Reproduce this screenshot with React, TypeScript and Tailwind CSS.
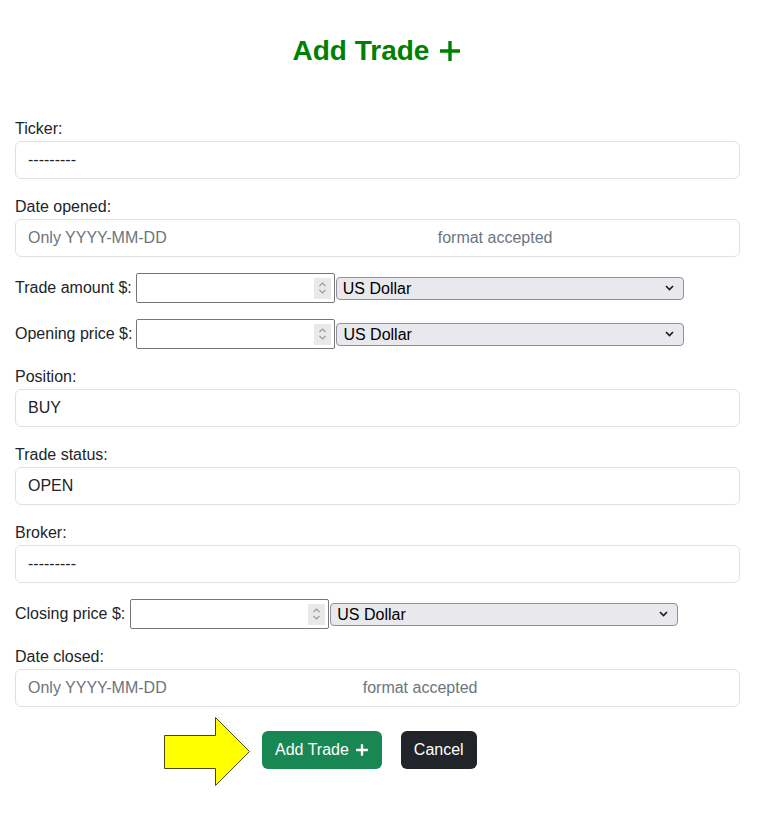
import { useState } from "react";

const PlusIcon = ({ size, stroke }: { size: number; stroke: number }) => (
  <svg width={size} height={size} viewBox="0 0 24 24" fill="none">
    <path d="M12 2v20M2 12h20" stroke="currentColor" strokeWidth={stroke} />
  </svg>
);

const Spinner = () => (
  <span className="flex h-[21px] w-[17px] flex-col items-center justify-center bg-[#e9e9ea]">
    <svg width="9" height="14" viewBox="0 0 9 14" fill="none">
      <path d="M1.5 5l3-3 3 3M1.5 9l3 3 3-3" stroke="#999999" strokeWidth="1.1" />
    </svg>
  </span>
);

function MoneyRow({
  label,
  inputGap,
}: {
  label: string;
  inputGap: string;
}) {
  const [val, setVal] = useState("");
  const [cur, setCur] = useState("USD");
  return (
    <div className="mb-4 flex h-[30px] items-center">
      <label className={inputGap}>{label}</label>
      <div className="flex h-[30px] w-[199px] items-center rounded-[2px] border border-[#767676] pr-[3px]">
        <input
          value={val}
          onChange={(e) => setVal(e.target.value)}
          inputMode="decimal"
          className="h-full min-w-0 flex-1 px-[2px] outline-none"
        />
        <Spinner />
      </div>
      <div className="ml-[1px] flex h-[23px] w-[348px] items-center rounded-[4px] border border-[#8f8f9d] bg-[#e9e9ed] pr-[9px]">
        <select
          value={cur}
          onChange={(e) => setCur(e.target.value)}
          className="h-full min-w-0 flex-1 appearance-none pl-[6px] leading-[19px] text-black outline-none"
        >
          <option value="USD">US Dollar</option>
          <option value="EUR">Euro</option>
          <option value="GBP">British Pound</option>
        </select>
        <svg width="9" height="6" viewBox="0 0 9 6" fill="none">
          <path d="M1 1l3.5 3.5L8 1" stroke="#1a1a1a" strokeWidth="1.6" />
        </svg>
      </div>
    </div>
  );
}

function Field({ label, value }: { label: string; value: string }) {
  return (
    <div className="mb-4">
      <label className="block leading-6">{label}</label>
      <input
        defaultValue={value}
        className="h-[38px] w-full rounded-[6px] border border-[#dee2e6] px-3 text-[#212529] outline-none"
      />
    </div>
  );
}

function DateField({
  label,
  gap,
  className = "mb-4",
}: {
  label: string;
  gap: string;
  className?: string;
}) {
  return (
    <div className={className}>
      <label className="block leading-6">{label}</label>
      <div className="flex h-[38px] w-full items-center rounded-[6px] border border-[#dee2e6] px-3 text-[#6c757d]">
        <span>Only YYYY-MM-DD</span>
        <span className={gap}>format accepted</span>
      </div>
    </div>
  );
}

export default function App() {
  return (
    <div className="min-h-screen bg-white font-['Liberation_Sans',Arial,sans-serif] text-[16px] text-[#212529]">
      <div className="ml-[15px] w-[725px] pt-[34px]">
        <h3 className="mb-[49px] flex h-[34px] items-center justify-center gap-[9px] text-[28px] font-bold leading-[34px] text-[#008000]">
          Add Trade
          <PlusIcon size={24} stroke={3.4} />
        </h3>

        <Field label="Ticker:" value="---------" />
        <DateField label="Date opened:" gap="ml-[271px]" />
        <MoneyRow label="Trade amount $:" inputGap="mr-[4px]" />
        <MoneyRow label="Opening price $:" inputGap="mr-[4px]" />
        <Field label="Position:" value="BUY" />
        <Field label="Trade status:" value="OPEN" />
        <Field label="Broker:" value="---------" />
        <MoneyRow label="Closing price $:" inputGap="mr-[5px]" />
        <DateField label="Date closed:" gap="ml-[196px]" className="mb-0" />

        <div className="ml-[148px] mt-[9px] flex items-center">
          <svg width="88" height="71" viewBox="0 0 88 71" fill="none">
            <polygon
              points="1.5,19.5 52.5,19.5 52.5,1.5 86.5,35.5 52.5,69.5 52.5,52.5 1.5,52.5"
              fill="#ffff00"
              stroke="#4a4a10"
              strokeWidth="1"
            />
          </svg>
          <button className="mb-[4px] ml-[11px] flex h-[38px] items-center gap-[6px] rounded-[6px] bg-[#198754] px-[13px] text-white">
            Add Trade
            <PlusIcon size={14} stroke={4} />
          </button>
          <button className="mb-[4px] ml-[19px] h-[38px] rounded-[6px] bg-[#212529] px-[13px] text-white">
            Cancel
          </button>
        </div>
      </div>
    </div>
  );
}
